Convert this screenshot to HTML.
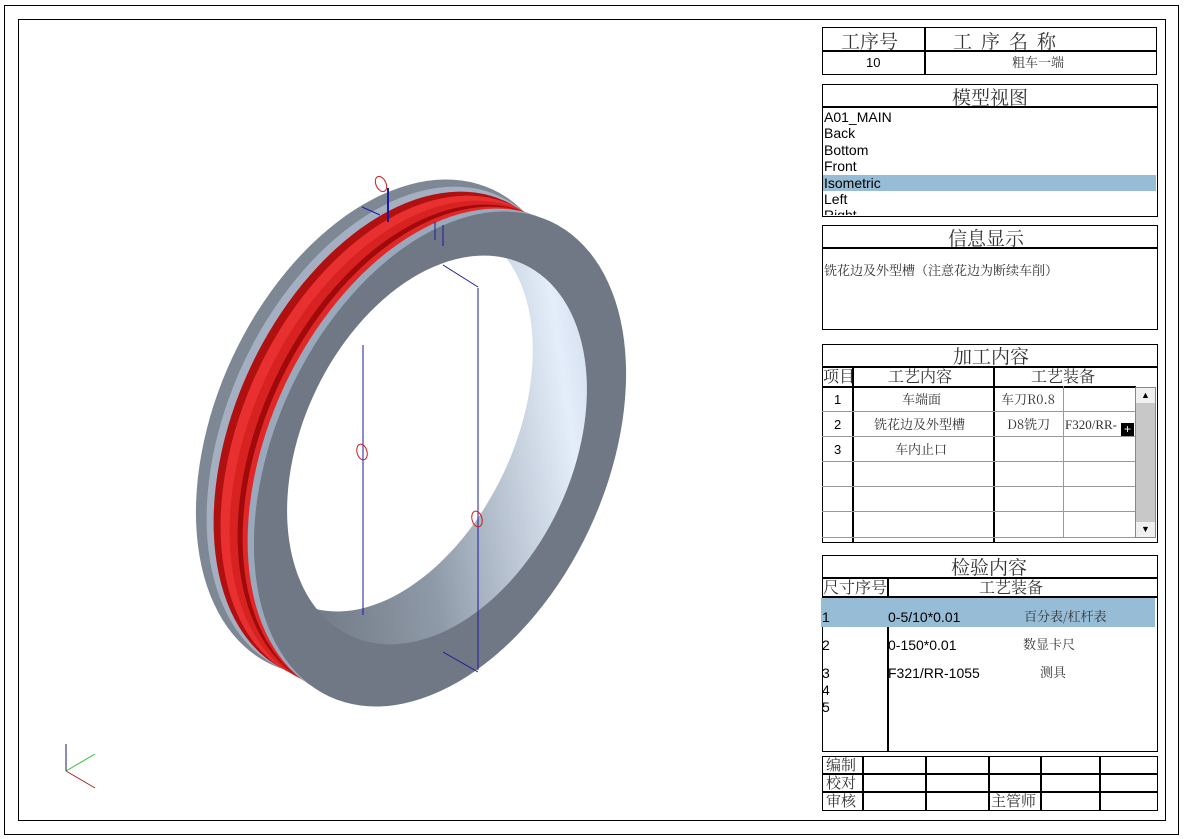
<!DOCTYPE html>
<html><head><meta charset="utf-8">
<style>
*{margin:0;padding:0;box-sizing:border-box}
body{width:1184px;height:839px;background:#fff;position:relative;overflow:hidden;font-family:"Liberation Sans","Noto Sans CJK SC",sans-serif;color:#000}
.a{position:absolute}
.b{position:absolute;border:1.5px solid #000}
.h{position:absolute;background:#000;height:1.5px}
.v{position:absolute;background:#000;width:1.5px}
.gh{position:absolute;background:#999;height:1px}
.gv{position:absolute;background:#999;width:1px}
.t{position:absolute;white-space:nowrap;line-height:1}
.cj{font-family:"Noto Serif CJK SC","Noto Sans CJK SC",sans-serif}
</style></head><body>
<div class="b" style="left:4px;top:5px;width:1175px;height:830px"></div>
<div class="b" style="left:18px;top:19px;width:1148px;height:802px"></div>

<svg class="a" style="left:0;top:0" width="800" height="839">
<defs>
<linearGradient id="gin" x1="0" y1="0" x2="1" y2="1">
<stop offset="0" stop-color="#5f6670"/><stop offset="0.45" stop-color="#8f9aa8"/><stop offset="0.8" stop-color="#e4eefb"/><stop offset="1" stop-color="#b9c4d4"/></linearGradient>
<clipPath id="hc"><ellipse cx="437" cy="450" rx="205" ry="135" transform="rotate(-65 437 450)"/></clipPath>
</defs>
<ellipse cx="382" cy="427" rx="262" ry="165" transform="rotate(-65 382 427)" fill="#7d8894"/>
<ellipse cx="390" cy="432" rx="260" ry="162" transform="rotate(-65 390 432)" fill="#a4b0c2"/>
<ellipse cx="396" cy="436" rx="259" ry="161" transform="rotate(-65 396 436)" fill="#b01010"/>
<ellipse cx="403" cy="440" rx="259" ry="161" transform="rotate(-65 403 440)" fill="#e83030"/>
<ellipse cx="412" cy="445" rx="259" ry="161" transform="rotate(-65 412 445)" fill="#d82222"/>
<ellipse cx="420" cy="449" rx="259" ry="161" transform="rotate(-65 420 449)" fill="#a00a0a"/>
<ellipse cx="426" cy="452" rx="260" ry="162" transform="rotate(-65 426 452)" fill="#e02828"/>
<ellipse cx="432" cy="455" rx="261" ry="163" transform="rotate(-65 432 455)" fill="#9aa8bc"/>
<ellipse cx="440" cy="459" rx="262" ry="165" transform="rotate(-65 440 459)" fill="#6f7884"/>
<ellipse cx="437" cy="450" rx="205" ry="135" transform="rotate(-65 437 450)" fill="url(#gin)"/>
<g clip-path="url(#hc)">
<ellipse cx="388" cy="418" rx="205" ry="128" transform="rotate(-65 388 418)" fill="#fff"/>
</g>
<g stroke="#1a1aa0" stroke-width="1" fill="none">
<line x1="363" y1="345" x2="363" y2="615"/>
<line x1="478" y1="288" x2="478" y2="670"/>
<line x1="443" y1="265" x2="478" y2="287"/>
<line x1="443" y1="652" x2="478" y2="672"/>
<line x1="388" y1="188" x2="388" y2="222" stroke-width="2"/>
<line x1="362" y1="207" x2="380" y2="215"/>
<line x1="435" y1="222" x2="435" y2="240"/>
<line x1="443" y1="225" x2="443" y2="246"/>
</g>
<g stroke="#d02020" stroke-width="1" fill="none">
<ellipse cx="381" cy="184" rx="5" ry="8" transform="rotate(-25 381 184)"/>
<ellipse cx="362" cy="452" rx="5" ry="8" transform="rotate(-15 362 452)"/>
<ellipse cx="477" cy="519" rx="5" ry="8" transform="rotate(-15 477 519)"/>
</g>
<line x1="66" y1="771" x2="66" y2="744" stroke="#1a1a80" stroke-width="1"/>
<line x1="66" y1="771" x2="95" y2="754" stroke="#30c030" stroke-width="1"/>
<line x1="66" y1="771" x2="95" y2="788" stroke="#b02020" stroke-width="1"/>
</svg>

<div class="b" style="left:822px;top:27px;width:335px;height:48px"></div>
<div class="h" style="left:822px;top:50px;width:335px"></div>
<div class="v" style="left:924px;top:27px;height:48px"></div>
<div class="t cj" style="left:841px;top:31px;font-size:19px;color:#333">工序号</div>
<div class="t cj" style="left:953px;top:31px;font-size:19px;letter-spacing:9px;color:#333">工序名称</div>
<div class="t" style="left:866px;top:56px;font-size:13px">10</div>
<div class="t cj" style="left:1012px;top:55px;font-size:13px;color:#333">粗车一端</div>

<div class="b" style="left:822px;top:84px;width:336px;height:133px"></div>
<div class="h" style="left:822px;top:106px;width:336px"></div>
<div class="t cj" style="left:952px;top:87px;font-size:19px;color:#333">模型视图</div>
<div class="a" style="left:823px;top:175px;width:333px;height:16px;background:#96bcd6"></div>
<div class="a" style="left:824px;top:109px;width:330px;height:106px;overflow:hidden;font-size:14px;line-height:16.4px">A01_MAIN<br>Back<br>Bottom<br>Front<br>Isometric<br>Left<br>Right</div>

<div class="b" style="left:822px;top:225px;width:336px;height:105px"></div>
<div class="h" style="left:822px;top:247px;width:336px"></div>
<div class="t cj" style="left:948px;top:228px;font-size:19px;color:#333">信息显示</div>
<div class="t cj" style="left:824px;top:263px;font-size:13px;color:#333">铣花边及外型槽（注意花边为断续车削）</div>

<div class="b" style="left:822px;top:344px;width:336px;height:199px"></div>
<div class="h" style="left:822px;top:366px;width:336px"></div>
<div class="h" style="left:822px;top:386px;width:314px"></div>
<div class="v" style="left:852px;top:366px;height:177px"></div>
<div class="v" style="left:993px;top:366px;height:177px"></div>
<div class="gv" style="left:1063px;top:386px;height:152px"></div>
<div class="gh" style="left:822px;top:411px;width:313px"></div>
<div class="gh" style="left:822px;top:436px;width:313px"></div>
<div class="gh" style="left:822px;top:461px;width:313px"></div>
<div class="gh" style="left:822px;top:486px;width:313px"></div>
<div class="gh" style="left:822px;top:511px;width:313px"></div>
<div class="gh" style="left:822px;top:537px;width:313px"></div>
<div class="t cj" style="left:953px;top:346px;font-size:19px;color:#333">加工内容</div>
<div class="t cj" style="left:823px;top:368px;font-size:16px;color:#333">项目</div>
<div class="t cj" style="left:888px;top:368px;font-size:16px;color:#333">工艺内容</div>
<div class="t cj" style="left:1031px;top:368px;font-size:16px;color:#333">工艺装备</div>
<div class="t" style="left:834px;top:393px;font-size:13px">1</div>
<div class="t" style="left:834px;top:418px;font-size:13px">2</div>
<div class="t" style="left:834px;top:443px;font-size:13px">3</div>
<div class="t cj" style="left:902px;top:392px;font-size:13px;color:#333">车端面</div>
<div class="t cj" style="left:874px;top:417px;font-size:13px;color:#333">铣花边及外型槽</div>
<div class="t cj" style="left:895px;top:442px;font-size:13px;color:#333">车内止口</div>
<div class="t cj" style="left:1001px;top:392px;font-size:13px;color:#333">车刀R0.8</div>
<div class="t cj" style="left:1007px;top:417px;font-size:13px;color:#333">D8铣刀</div>
<div class="t" style="left:1065px;top:418px;font-size:13px;font-family:'Liberation Serif',serif;color:#333">F320/RR-</div>
<div class="a" style="left:1121px;top:423px;width:13px;height:13px;background:#000;color:#fff;font-size:12px;line-height:13px;text-align:center">+</div>
<div class="a" style="left:1135px;top:387px;width:21px;height:151px;background:#c8c8c8;border:1px solid #888"></div>
<div class="a" style="left:1136px;top:388px;width:19px;height:15px;background:#f0f0f0;font-size:9px;text-align:center;line-height:15px">▲</div>
<div class="a" style="left:1136px;top:522px;width:19px;height:15px;background:#f0f0f0;font-size:9px;text-align:center;line-height:15px">▼</div>

<div class="b" style="left:822px;top:555px;width:336px;height:197px"></div>
<div class="h" style="left:822px;top:577px;width:336px"></div>
<div class="h" style="left:822px;top:596px;width:336px"></div>
<div class="v" style="left:887px;top:577px;height:20px"></div>
<div class="v" style="left:887px;top:627px;height:125px"></div>
<div class="a" style="left:821px;top:598px;width:334px;height:29px;background:#96bcd6"></div>
<div class="t cj" style="left:951px;top:557px;font-size:19px;color:#333">检验内容</div>
<div class="t cj" style="left:823px;top:579px;font-size:16px;color:#333">尺寸序号</div>
<div class="t cj" style="left:979px;top:579px;font-size:16px;color:#333">工艺装备</div>
<div class="t" style="left:822px;top:610px;font-size:14px">1</div>
<div class="t" style="left:888px;top:610px;font-size:14px">0-5/10*0.01</div>
<div class="t cj" style="left:1024px;top:609px;font-size:13px;color:#333">百分表/杠杆表</div>
<div class="t" style="left:822px;top:638px;font-size:14px">2</div>
<div class="t" style="left:888px;top:638px;font-size:14px">0-150*0.01</div>
<div class="t cj" style="left:1023px;top:637px;font-size:13px;color:#333">数显卡尺</div>
<div class="t" style="left:822px;top:666px;font-size:14px">3</div>
<div class="t" style="left:888px;top:666px;font-size:14px">F321/RR-1055</div>
<div class="t cj" style="left:1040px;top:665px;font-size:13px;color:#333">测具</div>
<div class="t" style="left:822px;top:683px;font-size:14px">4</div>
<div class="t" style="left:822px;top:700px;font-size:14px">5</div>

<div class="b" style="left:822px;top:756px;width:336px;height:55px"></div>
<div class="h" style="left:822px;top:773px;width:336px"></div>
<div class="h" style="left:822px;top:791px;width:336px"></div>
<div class="v" style="left:862px;top:756px;height:55px"></div>
<div class="v" style="left:925px;top:756px;height:55px"></div>
<div class="v" style="left:988px;top:756px;height:55px"></div>
<div class="v" style="left:1040px;top:756px;height:55px"></div>
<div class="v" style="left:1099px;top:756px;height:55px"></div>
<div class="t cj" style="left:826px;top:757px;font-size:15px;color:#333">编制</div>
<div class="t cj" style="left:826px;top:775px;font-size:15px;color:#333">校对</div>
<div class="t cj" style="left:826px;top:793px;font-size:15px;color:#333">审核</div>
<div class="t cj" style="left:991px;top:793px;font-size:15px;color:#333">主管师</div>
</body></html>
